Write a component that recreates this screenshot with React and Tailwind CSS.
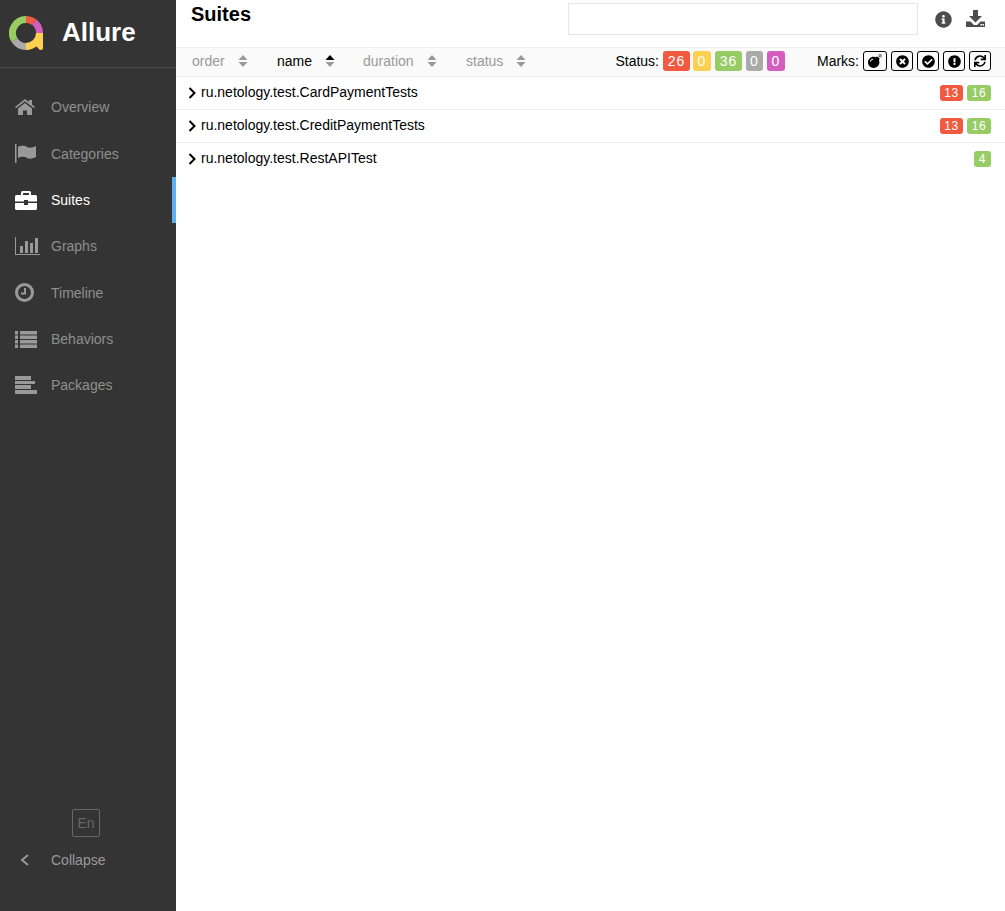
import { FaInfoCircle, FaBomb, FaTimesCircle, FaCheckCircle, FaExclamationCircle, FaSync } from "react-icons/fa"

function Logo() {
  const arc = (a, b) => {
    const r = 13.5
    const p = (d) => {
      const t = ((d - 90) * Math.PI) / 180
      return `${17 + r * Math.cos(t)} ${17 + r * Math.sin(t)}`
    }
    return `M${p(a)} A${r} ${r} 0 ${b - a > 180 ? 1 : 0} 1 ${p(b)}`
  }
  return (
    <svg width="36" height="36" viewBox="0 0 36 36" fill="none" strokeWidth="7">
      <path d={arc(0, 38)} stroke="#f05a41" />
      <path d={arc(38, 90)} stroke="#d35ebe" />
      <path d={arc(90, 180)} stroke="#fdd14f" />
      <path d={arc(180, 238)} stroke="#aaaaaa" />
      <path d={arc(238, 360)} stroke="#97cc64" />
      <path d="M27 17h7v15q0 2-2 2t-2-1l-3-3z" fill="#fdd14f" />
    </svg>
  )
}

function HomeIcon() {
  return (
    <svg width="20" height="16" viewBox="0 0 20 16" fill="currentColor">
      <path d="M10 0L0 8l1 1.3 9-7 9 7L20 8l-3-2.5V1h-3v2z" />
      <path d="M10 4L3 9.5V16h5v-4.500h4V16h5V9.500z" />
    </svg>
  )
}

function FlagIcon() {
  return (
    <svg width="21" height="19" viewBox="0 0 21 19" fill="currentColor">
      <rect x="0" y="0" width="1.500" height="19" />
      <path d="M3 3c4-2 7-1 9 0s5 1 9-1v11c-4 2-7 2-9 1s-5-2-9 0z" />
    </svg>
  )
}

function BriefcaseIcon() {
  return (
    <svg width="22" height="19" viewBox="0 0 22 19" fill="currentColor">
      <path d="M6 4V1.500Q6 0 7.500 0h7Q16 0 16 1.500V4h-2V2H8v2z" />
      <path d="M1.500 4h19Q22 4 22 5.500V10.500H13V9H9v1.500H0V5.500Q0 4 1.500 4z" />
      <path d="M0 12h9v2h4v-2h9v5.500Q22 19 20.500 19h-19Q0 19 0 17.500z" />
    </svg>
  )
}

function GraphIcon() {
  return (
    <svg width="25" height="18" viewBox="0 0 25 18" fill="currentColor">
      <rect x="0" y="0" width="1" height="17" />
      <rect x="0" y="17" width="25" height="1" />
      <rect x="5" y="9" width="3" height="7" />
      <rect x="10" y="4" width="3" height="12" />
      <rect x="15" y="6" width="3" height="10" />
      <rect x="20" y="1" width="3" height="15" />
    </svg>
  )
}

function ClockIcon() {
  return (
    <svg width="19" height="19" viewBox="0 0 19 19" fill="none" stroke="currentColor">
      <circle cx="9.500" cy="9.500" r="8" strokeWidth="3" />
      <path d="M10 5v5.500H6" strokeWidth="2" />
    </svg>
  )
}

function ListIcon() {
  return (
    <svg width="22" height="17" viewBox="0 0 22 17" fill="currentColor">
      <rect x="0" y="0" width="3" height="3.500" />
      <rect x="5" y="0" width="17" height="3.500" />
      <rect x="0" y="4.500" width="3" height="3.500" />
      <rect x="5" y="4.500" width="17" height="3.500" />
      <rect x="0" y="9" width="3" height="3.500" />
      <rect x="5" y="9" width="17" height="3.500" />
      <rect x="0" y="13.500" width="3" height="3.500" />
      <rect x="5" y="13.500" width="17" height="3.500" />
    </svg>
  )
}

function PackagesIcon() {
  return (
    <svg width="22" height="18" viewBox="0 0 22 18" fill="currentColor">
      <rect x="0" y="0" width="16" height="4" />
      <rect x="0" y="5" width="20" height="3" />
      <rect x="0" y="9" width="16" height="4" />
      <rect x="0" y="14" width="22" height="4" />
    </svg>
  )
}

function DownloadIcon() {
  return (
    <svg width="19" height="17" viewBox="0 0 19 17" fill="currentColor">
      <path d="M7 0h5v6h4l-6.500 6.500L3 6h4z" />
      <path d="M0 11.500h4.500L8 15h3l3.500-3.500H19V17H0z" />
      <rect x="14.500" y="14" width="1.500" height="1.500" fill="#ffffff" />
      <rect x="16.500" y="14" width="1.500" height="1.500" fill="#ffffff" />
    </svg>
  )
}

function SortArrows({ active }) {
  return (
    <svg width="10" height="12" viewBox="0 0 10 12" className="ml-[13px]">
      <path d="M5 0l4.500 5h-9z" fill={active ? "#000000" : "#999999"} />
      <path d="M5 12l4.500-5h-9z" fill="#999999" />
    </svg>
  )
}

const navItems = [
  { label: "Overview", icon: <HomeIcon /> },
  { label: "Categories", icon: <FlagIcon /> },
  { label: "Suites", icon: <BriefcaseIcon />, active: true },
  { label: "Graphs", icon: <GraphIcon /> },
  { label: "Timeline", icon: <ClockIcon /> },
  { label: "Behaviors", icon: <ListIcon /> },
  { label: "Packages", icon: <PackagesIcon /> },
]

const rows = [
  { name: "ru.netology.test.CardPaymentTests", failed: 13, passed: 16 },
  { name: "ru.netology.test.CreditPaymentTests", failed: 13, passed: 16 },
  { name: "ru.netology.test.RestAPITest", passed: 4 },
]

const marks = [
  <FaBomb size={14} />,
  <FaTimesCircle size={13} />,
  <FaCheckCircle size={13} />,
  <FaExclamationCircle size={13} />,
  <FaSync size={12} />,
]

export default function App() {
  return (
    <div className="flex h-[911px] w-full overflow-hidden bg-white font-['Liberation_Sans',sans-serif] text-sm text-black">
      {/* SIDEBAR */}
      <aside className="flex w-[176px] shrink-0 flex-col bg-[#343434]">
        <div className="flex h-[68px] items-center border-b border-[#4a4a4a] pl-[9px]">
          <Logo />
          <span className="ml-[17px] -mt-[2px] text-[26px] font-bold text-white">Allure</span>
        </div>

        <nav className="mt-[16.3px]">
          {navItems.map((item) => (
            <div
              key={item.label}
              className={`flex h-[46.33px] items-center ${item.active ? "border-r-4 border-[#5cb0f0] text-white" : "text-[#999999]"}`}
            >
              <span className="flex w-[51px] justify-start pl-[15px]">{item.icon}</span>
              <span className={item.active ? "text-white" : "text-[#8f8f8f]"}>{item.label}</span>
            </div>
          ))}
        </nav>

        <div className="mt-auto pb-[37px]">
          <div className="flex justify-center pr-[4px]">
            <div className="flex h-[28px] w-[28px] items-center justify-center rounded-[2px] border border-[#666666] text-[#666666]">
              En
            </div>
          </div>
          <div className="mt-[9px] flex h-[28px] items-center text-[#999999]">
            <span className="flex w-[51px] pl-[20px]">
              <svg width="9" height="12" viewBox="0 0 9 12" fill="none" stroke="currentColor" strokeWidth="2">
                <path d="M8 1L2 6l6 5" />
              </svg>
            </span>
            <span>Collapse</span>
          </div>
        </div>
      </aside>

      {/* MAIN */}
      <main className="flex min-w-0 flex-1 flex-col">
        <div className="flex h-[47px] pl-[15px] pr-[20px]">
          <h1 className="mt-[2px] text-xl font-bold leading-[24px]">Suites</h1>
          <div className="ml-auto mt-[3px] h-[32px] w-[350px] border border-[#e6e6e6]" />
          <div className="ml-[17px] mt-[10px] flex items-start gap-[14px] text-[#4d4d4d]">
            <FaInfoCircle size={17} className="mt-[1px]" />
            <DownloadIcon />
          </div>
        </div>

        <div className="flex h-[30px] items-center border-y border-[#eeeeee] bg-[#fafafa] pb-[2px] pl-[16px] pr-[14px]">
          <div className="flex w-[85px] items-center text-[#999999]">order<SortArrows /></div>
          <div className="flex w-[86px] items-center">name<SortArrows active /></div>
          <div className="flex w-[103px] items-center text-[#999999]">duration<SortArrows /></div>
          <div className="flex items-center text-[#999999]">status<SortArrows /></div>

          <span className="ml-auto">Status:</span>
          <div className="ml-[4px] flex gap-[4px] tracking-[1px] text-white">
            <span className="flex h-[20px] w-[27px] items-center justify-center rounded-[3px] bg-[#f05a41]">26</span>
            <span className="-ml-[1px] flex h-[20px] w-[18px] items-center justify-center rounded-[3px] bg-[#fdd14f]">0</span>
            <span className="flex h-[20px] w-[27px] items-center justify-center rounded-[3px] bg-[#97cc64]">36</span>
            <span className="flex h-[20px] w-[17px] items-center justify-center rounded-[3px] bg-[#aaaaaa]">0</span>
            <span className="flex h-[20px] w-[18px] items-center justify-center rounded-[3px] bg-[#d35ebe]">0</span>
          </div>

          <span className="ml-[32px]">Marks:</span>
          <div className="ml-[4px] flex gap-[4px]">
            {marks.map((icon, i) => (
              <span
                key={i}
                className={`flex h-[20px] items-center justify-center rounded-[3px] border border-black ${i === 0 ? "w-[24px]" : "w-[22px]"}`}
              >
                {icon}
              </span>
            ))}
          </div>
        </div>

        {rows.map((row, i) => (
          <div
            key={row.name}
            className={`flex h-[33px] items-start pl-[12px] pr-[14px] pt-[6px] ${i < rows.length - 1 ? "border-b border-[#eeeeee]" : ""}`}
          >
            <svg width="8" height="12" viewBox="0 0 8 12" fill="none" stroke="black" strokeWidth="2" className="mt-[4px]">
              <path d="M1.500 1l5 5-5 5" />
            </svg>
            <span className="ml-[5px] leading-[18px]">{row.name}</span>
            <div className="ml-auto mt-[2px] flex gap-[4px] text-xs tracking-[0.7px] text-white">
              {row.failed && (
                <span className="flex h-[16px] w-[23px] items-center justify-center rounded-[3px] bg-[#f05a41]">{row.failed}</span>
              )}
              <span className={`flex h-[16px] items-center justify-center rounded-[3px] bg-[#97cc64] ${row.passed > 9 ? "w-[24px]" : "w-[17px]"}`}>
                {row.passed}
              </span>
            </div>
          </div>
        ))}
      </main>
    </div>
  )
}
